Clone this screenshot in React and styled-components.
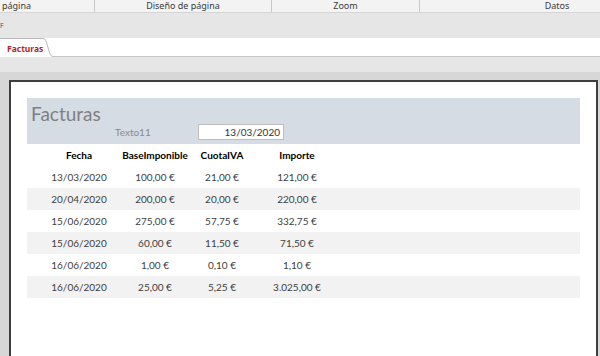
import styled, { createGlobalStyle } from 'styled-components';

const GlobalStyle = createGlobalStyle`
  html, body {
    margin: 0;
    padding: 0;
    background: #e6e6e6;
  }
  body {
    font-family: 'Lato', 'Liberation Sans', sans-serif;
  }
`;

const groups = [
  { label: 'página', width: 95, align: 'left' },
  { label: 'Diseño de página', width: 177 },
  { label: 'Zoom', width: 148 },
  { label: 'Datos', width: 274 },
];

const rows = [
  ['13/03/2020', '100,00 €', '21,00 €', '121,00 €'],
  ['20/04/2020', '200,00 €', '20,00 €', '220,00 €'],
  ['15/06/2020', '275,00 €', '57,75 €', '332,75 €'],
  ['15/06/2020', '60,00 €', '11,50 €', '71,50 €'],
  ['16/06/2020', '1,00 €', '0,10 €', '1,10 €'],
  ['16/06/2020', '25,00 €', '5,25 €', '3.025,00 €'],
];

const App = () => {
  return (
    <Window>
      <GlobalStyle />
      <Ribbon>
        {groups.map((g) => (
          <RibbonGroup key={g.label} $width={g.width} $align={g.align}>
            {g.label}
          </RibbonGroup>
        ))}
      </Ribbon>
      <QuickBar>
        <span>F</span>
      </QuickBar>
      <TabStrip>
        <Tab>
          <span>Facturas</span>
          <svg width="12" height="19" viewBox="0 0 12 19">
            <path d="M0 0.5 H2 Q4 0.5 5 3 L9 16 Q10 18.5 12 18.5" fill="none" stroke="#b9b9b9" />
          </svg>
        </Tab>
        <TabFill />
      </TabStrip>
      <Gutter>
        <Canvas>
          <Report>
            <HeaderBand>
              <Title>Facturas</Title>
              <FieldRow>
                <FieldLabel>Texto11</FieldLabel>
                <FieldBox>13/03/2020</FieldBox>
              </FieldRow>
            </HeaderBand>
            <Row $head>
              <Cell>Fecha</Cell>
              <Cell>BaseImponible</Cell>
              <Cell>CuotaIVA</Cell>
              <Cell>Importe</Cell>
            </Row>
            {rows.map((r, i) => (
              <Row key={i} $alt={i % 2 === 1}>
                {r.map((c, j) => (
                  <Cell key={j}>{c}</Cell>
                ))}
              </Row>
            ))}
          </Report>
        </Canvas>
      </Gutter>
    </Window>
  );
};

export default App;

const Window = styled.div`
  width: 600px;
  height: 356px;
  overflow: hidden;
  display: flex;
  flex-direction: column;
  background: #e6e6e6;
`;

const Ribbon = styled.div`
  height: 12px;
  display: flex;
  background: #f3f3f3;
  border-bottom: 1px solid #d6d6d6;
  overflow: hidden;
  flex-shrink: 0;
`;

const RibbonGroup = styled.div`
  flex: 0 0 ${(p) => p.$width}px;
  box-sizing: border-box;
  font-family: 'Noto Sans', 'Open Sans', sans-serif;
  font-size: 9px;
  line-height: 11px;
  color: #3a3a3a;
  text-align: ${(p) => p.$align || 'center'};
  padding-left: ${(p) => (p.$align === 'left' ? '2px' : '0')};
  border-right: 1px solid #c8c8c8;
  white-space: nowrap;
  &:last-child {
    border-right: none;
  }
`;

const QuickBar = styled.div`
  height: 25px;
  flex-shrink: 0;
  background: #e6e6e6;
  display: flex;
  align-items: center;
  span {
    font-family: 'Noto Sans', sans-serif;
    font-size: 7px;
    color: #555;
    margin-left: 0;
  }
`;

const TabStrip = styled.div`
  height: 19px;
  flex-shrink: 0;
  display: flex;
  background: #ffffff;
`;

const Tab = styled.div`
  display: flex;
  align-items: stretch;
  span {
    display: flex;
    align-items: center;
    padding: 0 0 0 7px;
    width: 34px;
    border-top: 1px solid #b9b9b9;
    font-family: 'Noto Sans', 'Open Sans', sans-serif;
    font-weight: 700;
    font-size: 8.5px;
    color: #b0262c;
  }
  svg {
    display: block;
  }
`;

const TabFill = styled.div`
  flex: 1;
  border-bottom: 1px solid #c6c6c6;
`;

const Gutter = styled.div`
  flex: 1;
  padding-top: 15px;
  background: #e6e6e6;
  display: flex;
  flex-direction: column;
`;

const Canvas = styled.div`
  flex: 1;
  background: #d7d7d7;
  padding: 8px 2px 0 9px;
  display: flex;
`;

const Report = styled.div`
  flex: 1;
  background: #ffffff;
  border-top: 2px solid #3e3e3e;
  border-left: 2px solid #3e3e3e;
  border-right: 2px solid #3e3e3e;
  padding: 16px 16px 0 16px;
`;

const HeaderBand = styled.div`
  height: 46px;
  box-sizing: border-box;
  background: #d6dce4;
  padding: 6px 0 0 4px;
`;

const Title = styled.div`
  font-size: 19px;
  line-height: 20px;
  color: #7f7f7f;
`;

const FieldRow = styled.div`
  display: flex;
  align-items: center;
  padding-left: 84px;
`;

const FieldLabel = styled.div`
  width: 83px;
  font-size: 10px;
  color: #8a8a8a;
`;

const FieldBox = styled.div`
  width: 86px;
  height: 16px;
  box-sizing: border-box;
  background: #ffffff;
  border: 1px solid #bdbdbd;
  font-size: 10px;
  line-height: 14px;
  color: #333;
  text-align: right;
  padding-right: 3px;
`;

const Row = styled.div`
  height: 22px;
  display: grid;
  grid-template-columns: 78px 74px 60px 90px;
  padding-left: 13px;
  align-items: center;
  background: ${(p) => (p.$alt ? '#f2f2f2' : 'transparent')};
  font-size: 10px;
  font-weight: ${(p) => (p.$head ? 700 : 400)};
  color: ${(p) => (p.$head ? '#000' : '#404040')};
`;

const Cell = styled.div`
  text-align: center;
  white-space: nowrap;
`;
